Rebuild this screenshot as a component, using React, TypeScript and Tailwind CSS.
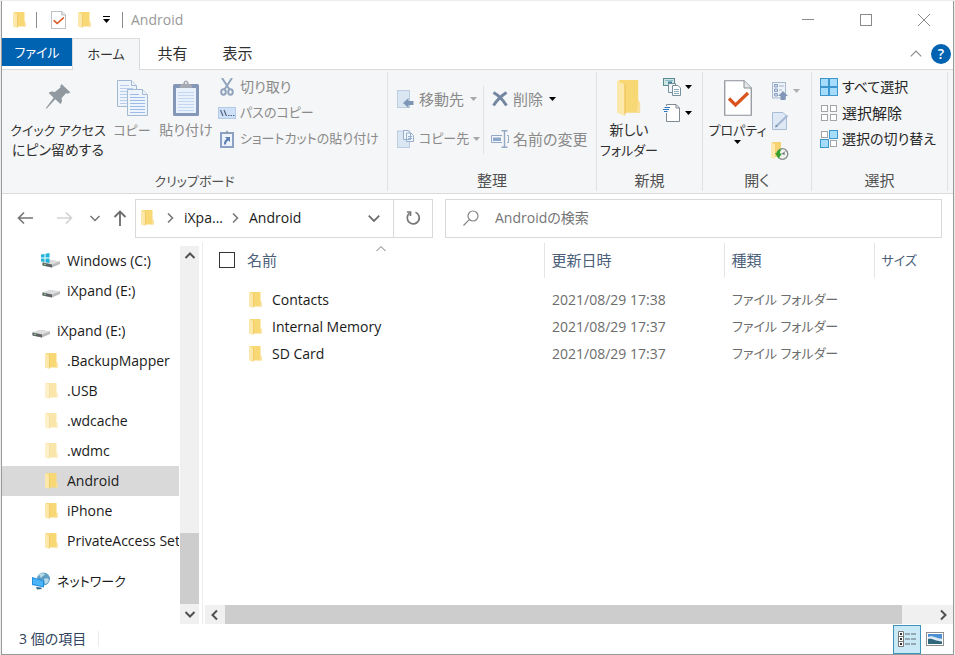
import React from 'react';

interface IconProps {
  className?: string;
}

const Folder = ({ className = 'w-[13px] h-4' }: IconProps) => (
  <svg viewBox="0 0 13 17" className={`shrink-0 ${className}`} preserveAspectRatio="none">
    <path d="M1 0H11.500V10L12.500 11V15.500H1Z" fill="#f8d775" />
    <path d="M11.500 9.500L12.500 10.500V15.500H10.500Z" fill="#fae09a" />
    <path d="M0 .3L4 2V17L0 15.300Z" fill="#fde8ab" />
    <path d="M4 2L4.800 1.800V15.700L4 17Z" fill="#efc965" />
  </svg>
);

const Caret = ({ className = 'text-black' }: IconProps) => (
  <svg viewBox="0 0 7 4" className={`w-[7px] h-1 shrink-0 ${className}`}>
    <path d="M0 0H7L3.500 4Z" fill="currentColor" />
  </svg>
);

const Chevron = ({ className = '' }: IconProps) => (
  <svg viewBox="0 0 12 12" className={`shrink-0 ${className}`} fill="none" stroke="currentColor">
    <path d="M1.500 4L6 8.500L10.500 4" />
  </svg>
);

const CheckedPage = ({ className = '' }: IconProps) => (
  <svg viewBox="0 0 28 36" className={`shrink-0 ${className}`} preserveAspectRatio="none">
    <path d="M.75 .75H20L27.250 8V35.250H.75Z" fill="#fff" stroke="#8a8f96" strokeWidth="1.200" />
    <path d="M20 .75V8H27.250" fill="#e4e7ea" stroke="#8a8f96" />
    <path d="M5 18.500L11.500 25L24 13" fill="none" stroke="#d9541e" strokeWidth="3.200" />
  </svg>
);

const Pin = () => (
  <svg viewBox="0 0 26 26" className="w-[26px] h-[26px]">
    <path
      d="M16.500 0L25.500 8.500L22.500 9.700L21 9.200L16.500 14.300C17.300 16.800 17 18.500 15.500 20L10.300 15.300L2 24.300L.8 25L1.300 23.500L8.600 13.800L3.700 9C5.500 7.300 7.800 7.200 9.800 8L15.500 3.500L15.300 2Z"
      fill="#8f999f"
    />
  </svg>
);

const CopyPages = ({ className = 'w-[31px] h-9' }: IconProps) => (
  <svg viewBox="0 0 31 36" className={`shrink-0 ${className}`} fill="#eef4fc" stroke="#a5b8d2">
    <path d="M.5 .5H14.500L19.500 5.500V26.500H.5Z" />
    <path d="M14.500 .5V5.500H19.500" />
    <path d="M3 5.500H12M3 8.500H16M3 11.500H16M3 14.500H16M3 17.500H16M3 20.500H16M3 23.500H16" stroke="#b9cdea" />
    <path d="M10.500 9.500H25.500L30.500 14.500V35.500H10.500Z" />
    <path d="M25.500 9.500V14.500H30.500" />
    <path d="M13 14.500H22M13 17.500H28M13 20.500H28M13 23.500H28M13 26.500H28M13 29.500H28M13 32.500H28" stroke="#9dbbe6" />
  </svg>
);

const Clipboard = () => (
  <svg viewBox="0 0 26 36" className="w-[26px] h-9">
    <rect x="0" y="4" width="26" height="32" rx="1.500" fill="#8497b9" />
    <rect x="3" y="8" width="20" height="25" fill="#e9f1fc" />
    <path d="M5 12.500H21M5 15.500H21M5 18.500H21M5 21.500H21M5 24.500H21M5 27.500H21M5 30.500H21" stroke="#c3d6f2" />
    <path d="M7 8V5L10.500 3.500C10.500 -.5 15.500 -.5 15.500 3.500L19 5V8Z" fill="#a4a9b3" />
    <circle cx="13" cy="3" r="1" fill="#f5f6f7" />
  </svg>
);

const Scissors = () => (
  <svg viewBox="0 0 14 18" className="w-3.5 h-[18px]" fill="none" stroke="#91a3bd">
    <path d="M2 0L9.500 11.500M12 0L4.500 11.500" strokeWidth="2" />
    <ellipse cx="3.500" cy="14" rx="2.300" ry="2.800" strokeWidth="2" />
    <ellipse cx="10.500" cy="14" rx="2.300" ry="2.800" strokeWidth="2" />
  </svg>
);

const PathCopy = () => (
  <svg viewBox="0 0 18 12" className="w-[18px] h-3">
    <rect x=".5" y=".5" width="17" height="11" fill="#cfe1f7" stroke="#b3cbe8" />
    <path d="M2.500 3L5 9M6 3L8.500 9" stroke="#4f6485" strokeWidth="1.200" />
    <path d="M10 8.500H11.500M12.500 8.500H14M15 8.500H16.500" stroke="#4f6485" strokeWidth="1.200" />
  </svg>
);

const PasteShortcut = () => (
  <svg viewBox="0 0 14 18" className="w-3.5 h-[18px]">
    <rect x="1" y="3" width="12" height="14" fill="#edf3fb" stroke="#8aa1c3" strokeWidth="2" />
    <path d="M4 4V2H6L7 0L8 2H10V4Z" fill="#8d9db5" />
    <path d="M5 7H10V12L8.500 10.500C6.500 11.500 6 12.500 6 14.500H4C3.800 12 4.700 10.200 6.700 8.800Z" fill="#5b7fb2" />
  </svg>
);

const MoveTo = () => (
  <svg viewBox="0 0 18 18" className="w-[18px] h-[18px]">
    <rect x=".5" y=".5" width="12" height="17" fill="#dae6f2" stroke="#bccde0" />
    <path d="M6 13L11.500 8V11H16.500V15H11.500V18Z" fill="#7f97b7" />
  </svg>
);

const CopyTo = () => (
  <svg viewBox="0 0 18 18" className="w-[18px] h-[18px]">
    <rect x=".5" y="1" width="12" height="16.500" fill="#dae6f2" stroke="#bccde0" />
    <path d="M6.500 .5H11L13.500 3V9.500H6.500ZM9.500 3H14L16.500 5.500V11.500H9.500Z" fill="#f0f5fb" stroke="#98afcd" />
    <path d="M11 6.500H15M11 8.500H15" stroke="#98afcd" />
  </svg>
);

const DeleteCross = () => (
  <svg viewBox="0 0 16 16" className="w-4 h-4">
    <path d="M1.500 1.500C6 4 11 9 14.500 14.500M14.500 1.500C9 5 5 9 1.500 14.500" stroke="#72869f" strokeWidth="3" fill="none" />
  </svg>
);

const Rename = () => (
  <svg viewBox="0 0 18 18" className="w-[18px] h-[18px]" fill="none" stroke="#93a8c5">
    <path d="M11 5.500H.5V12.500H11M16 5.500H17.500V12.500H16" />
    <rect x="2" y="7.500" width="8" height="3.500" fill="#8ba7cc" stroke="none" />
    <path d="M10.500 .7H16.500M10.500 17.300H16.500M13.500 .7V17.300" strokeWidth="1.400" />
  </svg>
);

const NewItem = () => (
  <svg viewBox="0 0 18 18" className="w-[18px] h-[18px]">
    <rect x=".5" y=".5" width="11" height="7" fill="#cfe6e6" stroke="#568b91" />
    <path d="M2 2.500H10" stroke="#8dbcc4" />
    <rect x="5" y="3.500" width="4" height="3" fill="#3e8298" />
    <path d="M5.500 5.500H12.500V14.500H5.500Z" fill="#f3f6f8" stroke="#77909b" />
    <path d="M9.500 7.500H15L17.500 10V17.500H9.500Z" fill="#fff" stroke="#77909b" />
    <path d="M11 11.500H16M11 13.500H16M11 15.500H16" stroke="#89aab8" />
  </svg>
);

const EasyAccess = () => (
  <svg viewBox="0 0 18 18" className="w-[18px] h-[18px]">
    <path d="M3.500 .5H13L16.500 4V17.500H3.500Z" fill="#fff" stroke="#818991" />
    <path d="M13 .5V4H16.500" fill="none" stroke="#818991" />
    <rect x="0" y="2" width="6" height="7" fill="#f5f6f7" />
    <path d="M1.500 3.500H7M0 5.500H6M1 7.500H4.500" stroke="#2b73c4" strokeWidth="1.200" />
  </svg>
);

const OpenWith = () => (
  <svg viewBox="0 0 16 18" className="w-4 h-[18px]">
    <rect x=".5" y=".5" width="13" height="15.500" fill="#edf2f8" stroke="#a7b8cf" />
    <path d="M2.500 2.500H5.500V5H2.500ZM2.500 7H5.500V9.500H2.500ZM2.500 11.500H5.500V14H2.500Z" fill="#cddbed" stroke="#8aa0c0" />
    <path d="M7 4H12M7 8H10" stroke="#a3b5cf" />
    <path d="M11 9L16 14H13.500V18H8.500V14H6Z" fill="#8297b7" />
  </svg>
);

const EditPage = () => (
  <svg viewBox="0 0 17 18" className="w-[17px] h-[18px]">
    <path d="M.5 .5H11L14.500 4V17.500H.5Z" fill="#dfe9f6" stroke="#a9bcd6" />
    <path d="M4 14.500L15.500 3.500" stroke="#a3b6d2" strokeWidth="2" />
    <path d="M3 15.500L4 12.500L6 14.500Z" fill="#7890b0" />
  </svg>
);

const History = () => (
  <svg viewBox="0 0 18 18" className="w-[18px] h-[18px]">
    <path d="M1 0H10V15H1Z" fill="#f6d272" />
    <path d="M0 .5L4 2V17L0 15.500Z" fill="#fde9b0" />
    <circle cx="11.500" cy="12" r="5.300" fill="#eef3ee" stroke="#868c88" strokeWidth="1.300" />
    <path d="M11.500 12L14 9.500M11.500 12H14" fill="none" stroke="#555" />
    <path d="M4 11L5.500 11C6 8.500 8 7 11 7.200C9.300 8.300 8.800 9.700 9 11.500H11L7.500 16.500Z" fill="#36a02e" />
  </svg>
);

const SelectTiles = ({ on }: { on: boolean[] }) => (
  <svg viewBox="0 0 18 18" className="w-[18px] h-[18px]">
    {on.map((filled, i) => (
      <rect
        key={i}
        x={(i % 2) * 9 + (filled ? 0.5 : 1.5)}
        y={Math.floor(i / 2) * 9 + (filled ? 0.5 : 1.5)}
        width={filled ? 8 : 6}
        height={filled ? 8 : 6}
        fill={filled ? '#a6dcfb' : '#fff'}
        stroke={filled ? '#3e96cf' : '#a2a5a8'}
      />
    ))}
  </svg>
);

const Drive = ({ windows = false }: { windows?: boolean }) => (
  <svg viewBox="0 0 20 16" className="w-5 h-4 shrink-0">
    <path d="M1.500 9.500L9 7L19 8.500V11L11 14.500L1.500 12.500Z" fill="#b9bbbd" />
    <path d="M1.500 9.500L9 7L19 8.500L11 11.500Z" fill="#dededf" />
    <path d="M1.500 9.500L11 11.500V14.500L1.500 12.500Z" fill="#606366" />
    <rect x="3" y="10.800" width="2" height="1" fill="#8ee08a" />
    {windows && <path d="M0 1.500L3.500 1V4.500H0ZM4.500 .8L8.500 0V4.500H4.500ZM0 5.500H3.500V9L0 8.500ZM4.500 5.500H8.500V10L4.500 9.200Z" fill="#1fb4d8" />}
  </svg>
);

const Network = () => (
  <svg viewBox="0 0 20 18" className="w-5 h-[18px] shrink-0">
    <circle cx="12.500" cy="7" r="6.500" fill="#5f9fc4" />
    <path d="M8 3C10 1 12 1 14 2C13 4 11 4 10 6ZM13 7C15 6 17 6 18 8C17 11 15 12 14 12Z" fill="#b8dbe8" />
    <path d="M1 5L13 8.500V15.500L1 13Z" fill="#1f8fe0" />
    <path d="M2 6.200L12 9.200V14.200L2 12Z" fill="#4db5f7" />
    <path d="M5 15L10 15.500L11 17L6 17.500Z" fill="#376a90" />
  </svg>
);

const GroupLabel = ({ children }: { children: React.ReactNode }) => (
  <div className="h-[23px] text-center leading-6 text-[#505050]">{children}</div>
);

interface SmallButtonProps {
  icon: React.ReactNode;
  label?: string;
  size?: 'text-[13px]' | 'text-sm' | 'text-[15px]';
  disabled?: boolean;
  caret?: string;
}

const SmallButton = ({ icon, label, size = 'text-[15px]', disabled, caret }: SmallButtonProps) => (
  <button
    disabled={disabled}
    className={`flex h-[26px] items-center gap-1 whitespace-nowrap ${size} ${disabled ? 'text-[#8a8a8a]' : 'text-[#262626]'}`}
  >
    <span className="flex w-[18px] shrink-0 justify-center">{icon}</span>
    {label && <span>{label}</span>}
    {caret && <Caret className={caret} />}
  </button>
);

const tree = [
  { name: 'Windows (C:)', icon: <Drive windows />, pad: 'pl-[39px]' },
  { name: 'iXpand (E:)', icon: <Drive />, pad: 'pl-[39px]' },
  { name: 'iXpand (E:)', icon: <Drive />, pad: 'pl-[29px]', gap: true },
  { name: '.BackupMapper', icon: <Folder />, pad: 'pl-[39px]' },
  { name: '.USB', icon: <Folder className="w-[13px] h-4 opacity-60" />, pad: 'pl-[39px]' },
  { name: '.wdcache', icon: <Folder className="w-[13px] h-4 opacity-60" />, pad: 'pl-[39px]' },
  { name: '.wdmc', icon: <Folder className="w-[13px] h-4 opacity-60" />, pad: 'pl-[39px]' },
  { name: 'Android', icon: <Folder />, pad: 'pl-[39px]', active: true },
  { name: 'iPhone', icon: <Folder />, pad: 'pl-[39px]' },
  { name: 'PrivateAccess Settings', icon: <Folder />, pad: 'pl-[39px]' },
  { name: 'ネットワーク', icon: <Network />, pad: 'pl-[29px]', gap: true },
];

const files = [
  { name: 'Contacts', date: '2021/08/29 17:38' },
  { name: 'Internal Memory', date: '2021/08/29 17:37' },
  { name: 'SD Card', date: '2021/08/29 17:37' },
];

const TitleBar = () => (
  <header className="flex h-[37px] items-center pl-[11px]">
    <Folder />
    <span className="ml-2.5 h-4 w-px bg-[#8c8c8c]" />
    <button aria-label="プロパティ" className="ml-3.5">
      <CheckedPage className="w-[15px] h-[18px]" />
    </button>
    <button aria-label="新しいフォルダー" className="ml-3">
      <Folder />
    </button>
    <button aria-label="カスタマイズ" className="ml-3 flex flex-col items-center gap-0.5">
      <span className="h-px w-[7px] bg-black" />
      <Caret />
    </button>
    <span className="ml-3 h-4 w-px bg-[#8c8c8c]" />
    <h1 className="ml-2 flex-1 text-sm text-[#999]">Android</h1>
    <div className="flex h-full text-[#8a8a8a]">
      <button aria-label="最小化" className="flex w-[58px] items-center justify-center">
        <span className="h-px w-3 bg-[#8a8a8a]" />
      </button>
      <button aria-label="最大化" className="flex w-[58px] items-center justify-center">
        <span className="h-3 w-3 border border-[#8a8a8a]" />
      </button>
      <button aria-label="閉じる" className="flex w-[58px] items-center justify-center">
        <svg viewBox="0 0 12 12" className="w-3 h-3" stroke="currentColor">
          <path d="M0 0L12 12M12 0L0 12" />
        </svg>
      </button>
    </div>
  </header>
);

const Tabs = () => (
  <nav className="flex h-8 items-stretch border-b border-[#dadbdc] text-[#303030]">
    <button className="mb-[3px] w-[70px] bg-[#0063b1] pt-0.5 text-[13px] text-white">ファイル</button>
    <button className="-mb-px w-[68px] border border-b-0 border-[#dadbdc] bg-[#f5f6f7] text-[13px]">ホーム</button>
    <button className="w-[65px]">共有</button>
    <button className="w-[65px]">表示</button>
    <div className="flex-1" />
    <button aria-label="リボンの最小化" className="mr-2">
      <Chevron className="w-3.5 h-3.5 rotate-180 text-[#8a8a8a]" />
    </button>
    <button aria-label="ヘルプ" className="mr-0.5 mt-1.5 h-5 w-5 rounded-full bg-[#0063b1] text-sm leading-5 font-semibold text-white">
      ?
    </button>
  </nav>
);

const Ribbon = () => (
  <section className="flex border-b border-[#dadbdc] bg-[#f5f6f7] py-0.5 text-[#303030]">
    <div className="flex w-[386px] flex-col border-r border-[#e0e2e4]">
      <div className="flex h-24 pl-2">
        <button className="flex w-24 flex-col items-center pt-3 text-[13px] leading-5">
          <Pin />
          <span className="mt-2.5 whitespace-nowrap">クイック アクセス</span>
          <span className="text-sm leading-5">にピン留めする</span>
        </button>
        <button disabled className="ml-1.5 flex w-10 flex-col items-center justify-start gap-1 pt-2 text-[13px] leading-5 text-[#8a8a8a]">
          <CopyPages />
          <span>コピー</span>
        </button>
        <button disabled className="ml-1.5 flex w-14 flex-col items-center justify-start gap-1 pt-2 text-sm leading-5 text-[#8a8a8a]">
          <Clipboard />
          <span className="whitespace-nowrap">貼り付け</span>
        </button>
        <div className="ml-1 flex flex-col pt-0.5">
          <SmallButton icon={<Scissors />} label="切り取り" size="text-sm" disabled />
          <SmallButton icon={<PathCopy />} label="パスのコピー" size="text-[13px]" disabled />
          <SmallButton icon={<PasteShortcut />} label="ショートカットの貼り付け" size="text-[13px]" disabled />
        </div>
      </div>
      <GroupLabel>
        <span className="text-[13px]">クリップボード</span>
      </GroupLabel>
    </div>

    <div className="flex w-[209px] flex-col border-r border-[#e0e2e4]">
      <div className="flex h-24 pl-[9px]">
        <div className="flex w-[87px] flex-col gap-3.5 border-r border-[#e0e2e4] my-3.5">
          <SmallButton icon={<MoveTo />} label="移動先" disabled caret="text-[#a8a8a8] ml-0.5" />
          <SmallButton icon={<CopyTo />} label="コピー先" size="text-[13px]" disabled caret="text-[#a8a8a8]" />
        </div>
        <div className="flex flex-col gap-3.5 py-3.5 pl-[7px]">
          <SmallButton icon={<DeleteCross />} label="削除" disabled caret="text-black ml-0.5" />
          <SmallButton icon={<Rename />} label="名前の変更" disabled />
        </div>
      </div>
      <GroupLabel>整理</GroupLabel>
    </div>

    <div className="flex w-[106px] flex-col border-r border-[#e0e2e4]">
      <div className="flex h-24 pl-1">
        <button className="flex w-14 flex-col items-center pt-2 text-[13px] leading-5">
          <Folder className="w-6 h-9" />
          <span className="mt-1 text-sm leading-5">新しい</span>
          <span className="whitespace-nowrap">フォルダー</span>
        </button>
        <div className="ml-1.5 flex flex-col pt-0.5">
          <SmallButton icon={<NewItem />} caret="text-black" />
          <SmallButton icon={<EasyAccess />} caret="text-black" />
        </div>
      </div>
      <GroupLabel>新規</GroupLabel>
    </div>

    <div className="flex w-[109px] flex-col border-r border-[#e0e2e4]">
      <div className="flex h-24 pl-px">
        <button className="flex w-[67px] flex-col items-center pt-2 text-[13px] leading-5">
          <CheckedPage className="w-7 h-9" />
          <span className="mt-1 whitespace-nowrap">プロパティ</span>
          <Caret />
        </button>
        <div className="flex flex-col gap-1 pt-1.5">
          <SmallButton icon={<OpenWith />} disabled caret="text-[#b0b0b0]" />
          <SmallButton icon={<EditPage />} disabled />
          <SmallButton icon={<History />} />
        </div>
      </div>
      <GroupLabel>開く</GroupLabel>
    </div>

    <div className="flex w-[136px] flex-col border-r border-[#e0e2e4]">
      <div className="flex h-24 flex-col pl-2 pt-0.5">
        <SmallButton icon={<SelectTiles on={[true, true, true, true]} />} label="すべて選択" size="text-sm" />
        <SmallButton icon={<SelectTiles on={[false, false, false, false]} />} label="選択解除" />
        <SmallButton icon={<SelectTiles on={[false, true, true, false]} />} label="選択の切り替え" size="text-sm" />
      </div>
      <GroupLabel>選択</GroupLabel>
    </div>
  </section>
);

const AddressRow = () => (
  <div className="flex h-12 items-center pr-[11px] pl-[15px] text-sm">
    <button aria-label="戻る">
      <svg viewBox="0 0 16 14" className="w-4 h-3.5" fill="none" stroke="#747474" strokeWidth="1.600">
        <path d="M16 7H1.500M7 1.500L1.500 7L7 12.500" />
      </svg>
    </button>
    <button aria-label="進む" className="ml-6" disabled>
      <svg viewBox="0 0 16 14" className="w-4 h-3.5" fill="none" stroke="#d2d2d2" strokeWidth="1.600">
        <path d="M0 7H14.500M9 1.500L14.500 7L9 12.500" />
      </svg>
    </button>
    <button aria-label="最近表示した場所" className="ml-4">
      <Chevron className="w-3 h-3 text-[#747474] stroke-[1.5]" />
    </button>
    <button aria-label="上へ" className="ml-3">
      <svg viewBox="0 0 14 16" className="w-3.5 h-4" fill="none" stroke="#6c6c6c" strokeWidth="1.800">
        <path d="M7 16V1.500M1.500 7L7 1.500L12.500 7" />
      </svg>
    </button>
    <div className="ml-2 flex h-[39px] w-[298px] shrink-0 items-stretch border border-[#d9d9d9]">
      <div className="flex flex-1 items-center pl-[5px]">
        <Folder />
        <Chevron className="ml-2.5 w-3 h-3 -rotate-90 text-[#747474] stroke-[1.5]" />
        <a href="#ixpand" className="ml-2 text-[#1a1a1a]">iXpa...</a>
        <Chevron className="ml-1.5 w-3 h-3 -rotate-90 text-[#747474] stroke-[1.5]" />
        <a href="#android" className="ml-2 text-[#1a1a1a]">Android</a>
      </div>
      <button aria-label="履歴" className="w-9 pl-2.5">
        <Chevron className="w-3.5 h-3.5 text-[#6c6c6c] stroke-[1.5]" />
      </button>
      <button aria-label="最新の情報に更新" className="flex w-[39px] items-center justify-center border-l border-[#d9d9d9]">
        <svg viewBox="0 0 16 16" className="w-4 h-4" fill="none" stroke="#777" strokeWidth="1.700">
          <path d="M10.500 2.300A6 6 0 1 1 4.500 3.200" />
          <path d="M2 2H5.500V6" />
        </svg>
      </button>
    </div>
    <label className="ml-3 flex h-[39px] min-w-0 flex-1 items-center border border-[#d9d9d9] pl-[17px]">
      <svg viewBox="0 0 16 16" className="w-4 h-4 shrink-0" fill="none" stroke="#858585" strokeWidth="1.200">
        <circle cx="10" cy="6" r="5" />
        <path d="M6.300 9.700L.5 15.500" />
      </svg>
      <input
        aria-label="検索"
        placeholder="Androidの検索"
        className="ml-4 min-w-0 flex-1 outline-none placeholder:text-[#757575]"
      />
    </label>
  </div>
);

const Sidebar = () => (
  <aside className="flex w-[201px] shrink-0 border-r border-[#ededed] pt-1">
    <ul className="w-[177px] overflow-hidden text-sm text-[#1a1a1a]">
      {tree.map((item, i) => (
        <li key={i} className={item.gap ? 'mt-2.5' : ''}>
          <a
            href="#tree"
            className={`flex h-[30px] items-center gap-1.5 whitespace-nowrap ${item.pad} ${item.active ? 'bg-[#d9d9d9]' : ''}`}
          >
            <span className="flex w-5 shrink-0 justify-center">{item.icon}</span>
            {item.name === 'ネットワーク' ? <span className="text-[13px]">{item.name}</span> : item.name}
          </a>
        </li>
      ))}
    </ul>
    <div className="ml-px flex w-[19px] flex-col bg-[#f0f0f0]">
      <button aria-label="上へスクロール" className="flex h-5 items-center justify-center">
        <Chevron className="w-3 h-3 rotate-180 text-[#505050] stroke-2" />
      </button>
      <div className="flex-1" />
      <div className="h-[71px] bg-[#cdcdcd]" />
      <button aria-label="下へスクロール" className="flex h-5 items-center justify-center">
        <Chevron className="w-3 h-3 text-[#505050] stroke-2" />
      </button>
    </div>
  </aside>
);

const FileList = () => (
  <main className="flex min-w-0 flex-1 flex-col pt-px">
    <table className="w-full table-fixed text-left text-sm text-[#6d6d6d]">
      <thead>
        <tr className="h-[35px] text-[15px] text-[#4c607a]">
          <th className="relative w-[341px] border-r border-[#e5e5e5] p-0 pl-4 font-normal">
            <label className="flex items-center gap-3">
              <input type="checkbox" className="h-4 w-4 appearance-none border border-[#333] bg-white" />
              名前
            </label>
            <Chevron className="absolute top-0 left-[172px] w-3 h-3 rotate-180 text-[#777]" />
          </th>
          <th className="w-[180px] border-r border-[#e5e5e5] p-0 pl-[7px] font-normal">更新日時</th>
          <th className="w-[150px] border-r border-[#e5e5e5] p-0 pl-[7px] font-normal">種類</th>
          <th className="p-0 pl-[7px] text-[13px] font-normal">サイズ</th>
        </tr>
        <tr className="h-2" />
      </thead>
      <tbody>
        {files.map((file) => (
          <tr key={file.name} className="h-[27px]">
            <td className="p-0 pl-[46px]">
              <span className="flex items-center gap-2.5 text-[#1a1a1a]">
                <Folder />
                {file.name}
              </span>
            </td>
            <td className="p-0 pl-2">{file.date}</td>
            <td className="p-0 pl-2 text-[13px]">ファイル フォルダー</td>
            <td className="p-0" />
          </tr>
        ))}
      </tbody>
    </table>
    <div className="flex-1" />
    <div className="ml-0.5 flex h-[19px] bg-[#f0f0f0]">
      <button aria-label="左へスクロール" className="flex w-5 items-center justify-center">
        <Chevron className="w-3 h-3 rotate-90 text-[#505050] stroke-2" />
      </button>
      <div className="flex-1 bg-[#cdcdcd]" />
      <div className="w-[31px]" />
      <button aria-label="右へスクロール" className="flex w-5 items-center justify-center">
        <Chevron className="w-3 h-3 -rotate-90 text-[#505050] stroke-2" />
      </button>
    </div>
  </main>
);

const StatusBar = () => (
  <footer className="flex h-[30px] items-center pr-1 pl-[17px] text-sm text-[#2f4560]">
    <span>3 個の項目</span>
    <span className="ml-3 h-4 w-px bg-[#ececec]" />
    <div className="flex-1" />
    <button aria-label="詳細" className="flex h-[29px] w-7 items-center justify-center border border-[#3d93ba] bg-[#c9e9f7]">
      <svg viewBox="0 0 18 16" className="w-[18px] h-4" fill="none" stroke="#777">
        <path d="M.5 .5H5.500V15.500H.5ZM.5 5.500H5.500M.5 10.500H5.500" fill="#fff" />
        <path d="M2 3H4M2 8H4M2 13H4" stroke="#333" strokeWidth="2" />
        <path d="M7 3H12M13 3H18M7 8H12M13 8H18M7 13H12M13 13H18" stroke="#606a70" />
      </svg>
    </button>
    <button aria-label="大アイコン" className="flex h-[29px] w-7 items-center justify-center">
      <svg viewBox="0 0 18 14" className="w-[18px] h-3.5">
        <rect x=".5" y=".5" width="17" height="13" fill="#fff" stroke="#8e8e8e" />
        <rect x="2" y="2" width="14" height="10" fill="#4c8fd3" />
        <path d="M2 5C6 3 9 6 16 7V10H2Z" fill="#dcebf5" />
        <path d="M2 7C6 6 9 9 16 9.500V12H2Z" fill="#31677c" />
      </svg>
    </button>
  </footer>
);

const App = () => {
  return (
    <div className="min-h-screen bg-[#ededed] px-px pt-px font-['Open_Sans','Noto_Sans_CJK_JP',sans-serif] text-[15px] [font-feature-settings:'palt']">
      <div className="flex min-h-[calc(100vh-1px)] flex-col border border-t-0 border-[#999] bg-white">
        <TitleBar />
        <Tabs />
        <Ribbon />
        <AddressRow />
        <div className="flex flex-1">
          <Sidebar />
          <FileList />
        </div>
        <StatusBar />
      </div>
    </div>
  );
};

export default App;
